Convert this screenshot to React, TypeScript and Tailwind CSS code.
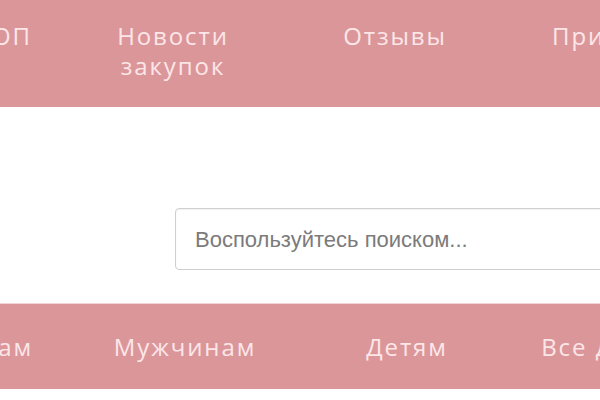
const topItems = ["Отзывы", "Пристрой"]
const bottomItems = ["Мужчинам", "Детям", "Все для дома"]

export default function App() {
  return (
    <div className="h-[400px] w-[600px] overflow-hidden bg-white font-['Open_Sans',sans-serif]">
      <nav className="flex h-[107px] overflow-hidden whitespace-nowrap bg-[#db969a] pt-[21px] text-[24px] leading-[30px] tracking-[1.9px] text-[#fce6e8]">
        <div className="w-[62px] shrink-0 pr-[30px] text-right">
          <span className="float-right">ТОП</span>
        </div>
        <div className="w-[222px] shrink-0 text-center">
          Новости
          <br />
          закупок
        </div>
        {topItems.map((item) => (
          <div key={item} className="w-[222px] shrink-0 text-center">
            {item}
          </div>
        ))}
      </nav>

      <div className="h-[196px] pl-[175px] pt-[101px]">
        <div className="flex h-[62px] w-[500px] items-center rounded-[4px] border border-[#cfcfcf] bg-white pl-[19px] shadow-[inset_0_1px_2px_rgba(0,0,0,0.06)]">
          <span className="font-['Liberation_Sans',Arial,sans-serif] text-[22px] text-[#7b7b7b]">
            Воспользуйтесь поиском...
          </span>
        </div>
      </div>

      <nav className="flex h-[86px] items-center overflow-hidden whitespace-nowrap border-t border-[#f3d2d4] bg-[#db969a] text-[24px] tracking-[1.9px] text-[#fce6e8]">
        <div className="w-[74px] shrink-0 pr-[41px] text-right">
          <span className="float-right">Женщинам</span>
        </div>
        {bottomItems.map((item) => (
          <div key={item} className="w-[222px] shrink-0 text-center">
            {item}
          </div>
        ))}
      </nav>
    </div>
  )
}
